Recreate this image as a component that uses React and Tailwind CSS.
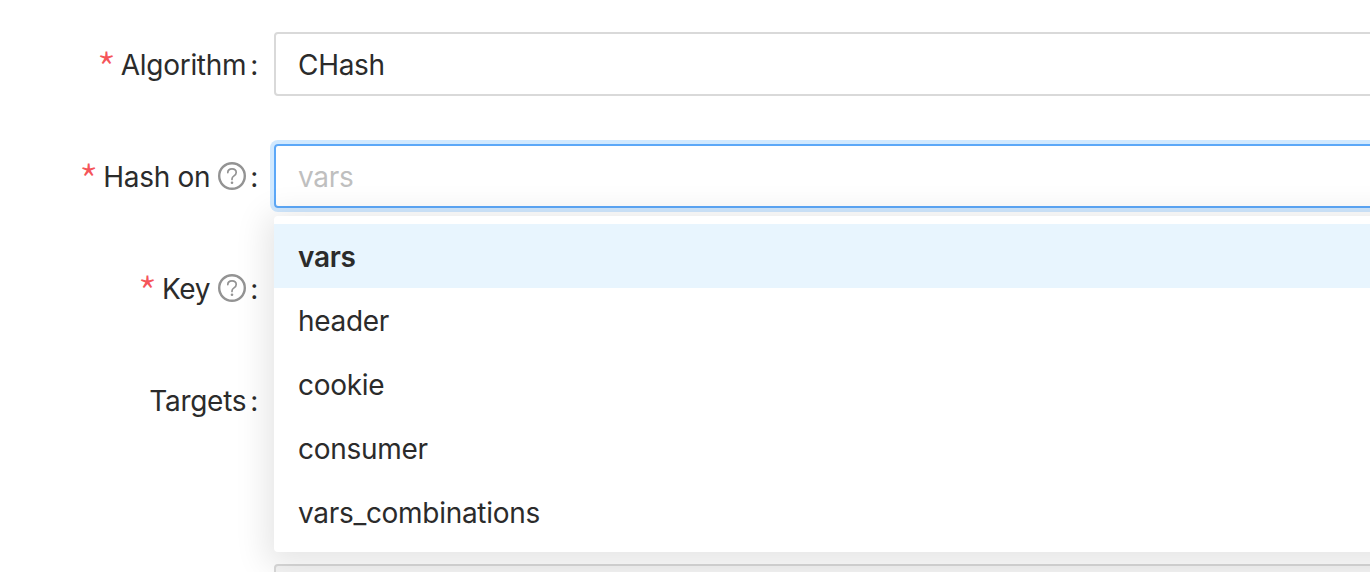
import React from 'react';

const font = { fontFamily: 'Inter, "Liberation Sans", sans-serif', letterSpacing: '-0.3px' };

const options = ['vars', 'header', 'cookie', 'consumer', 'vars_combinations'];

const HelpIcon = () => (
  <svg width="28" height="28" viewBox="0 0 28 28" fill="none" className="ml-2 shrink-0">
    <circle cx="14" cy="14" r="12.8" stroke="#939393" strokeWidth="2.4" />
    <path
      d="M9.8 10.6c0-2.2 1.8-3.8 4.2-3.8s4.2 1.5 4.2 3.7c0 1.7-1 2.6-2.2 3.4-1.2.8-2 1.5-2 3v.5"
      stroke="#939393"
      strokeWidth="1.7"
      strokeLinecap="round"
    />
    <circle cx="14" cy="20.8" r="1.3" fill="#939393" />
  </svg>
);

const Label = ({ text, required, help }) => (
  <div className="w-[274px] shrink-0 h-16 flex items-center justify-end pr-4 text-[28px] text-[#2b2b2b]">
    {required && (
      <span className="mr-[5px] text-[44px] font-light text-[#f5555a] leading-none translate-y-[3px] [font-family:'Noto_Sans_CJK_SC',sans-serif]">
        *
      </span>
    )}
    <span className="pt-px">{text}</span>
    {help && <HelpIcon />}
    <span className="ml-1 pt-px">:</span>
  </div>
);

export default function App() {
  return (
    <div style={font} className="relative w-[1370px] h-[572px] overflow-hidden bg-white pt-8 leading-none">
      <div className="flex flex-col gap-12 w-[1500px]">
        <div className="flex">
          <Label text="Algorithm" required />
          <div className="flex-1 h-16 flex items-center pt-px px-[22px] rounded border-2 border-[#d9d9d9] text-[28px] text-[#2b2b2b]">
            CHash
          </div>
        </div>
        <div className="flex">
          <Label text="Hash on" required help />
          <div className="flex-1 h-16 flex items-center pt-px px-[22px] rounded border-2 border-[#5ca8f8] shadow-[0_0_0_4px_rgba(24,144,255,0.2)] text-[28px] text-[#bfbfbf]">
            vars
          </div>
        </div>
        <div className="flex">
          <Label text="Key" required help />
        </div>
        <div className="flex">
          <Label text="Targets" />
        </div>
      </div>
      <div className="absolute left-[274px] top-[564px] w-[1200px] h-16 rounded border-2 border-[#d9d9d9] bg-[#f5f5f5]"></div>
      <div className="absolute left-[274px] top-[216px] w-[1200px] py-2 bg-white rounded shadow-[0_6px_32px_8px_rgba(0,0,0,0.1)] text-[28px] text-[#2b2b2b]">
        {options.map((option, index) => (
          <div
            key={option}
            className={index === 0 ? 'h-16 flex items-center pt-px px-6 bg-[#e8f5fe] font-semibold' : 'h-16 flex items-center pt-px px-6'}
          >
            {option}
          </div>
        ))}
      </div>
    </div>
  );
}
